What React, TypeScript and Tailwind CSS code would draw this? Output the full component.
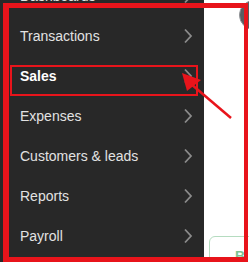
import React from "react";

const items = [
  { label: "Dashboards", active: false },
  { label: "Transactions", active: false },
  { label: "Sales", active: true },
  { label: "Expenses", active: false },
  { label: "Customers & leads", active: false },
  { label: "Reports", active: false },
  { label: "Payroll", active: false },
];

function Chevron() {
  return (
    <svg width="10" height="16" viewBox="0 0 10 16" fill="none">
      <path d="M2 1.5 L8 8 L2 14.5" stroke="#8b8b8b" strokeWidth="1.8" />
    </svg>
  );
}

export default function App() {
  return (
    <div className="relative flex h-[262px] w-[249px] overflow-hidden bg-white font-['Liberation_Sans',Arial,sans-serif]">
      {/* Sidebar */}
      <nav className="flex h-full w-[204px] shrink-0 flex-col bg-[#282828]">
        <div className="-mt-6 flex flex-col">
          {items.map((item) => (
            <div key={item.label} className="flex h-10 items-center justify-between pl-5 pr-[11px]">
              <span
                className={
                  item.active
                    ? "text-[14px] font-bold leading-5 text-white"
                    : "text-[14px] leading-5 text-[#e2e2e2]"
                }
              >
                {item.label}
              </span>
              <Chevron />
            </div>
          ))}
        </div>
      </nav>

      {/* Main area */}
      <div className="relative flex min-w-0 flex-1 flex-col">
        {/* avatar, cut off at the corner */}
        <div className="absolute -right-[20px] top-0 h-[30px] w-[30px] rounded-full border border-[#8f9296] bg-[#5a5d62]" />
        <div className="-mb-4 ml-[5px] mt-auto h-[42px] w-[80px] shrink-0 rounded-md border border-[#b5dcc0] pl-[25px] pt-[11px] leading-none">
          <span className="text-[14px] font-bold leading-none text-[#7cc493]">B</span>
        </div>
      </div>

      {/* Annotation overlays */}
      <div className="pointer-events-none absolute left-[3px] top-[3px] h-[259px] w-[245px] border-y-[5px] border-l-[6px] border-r-[4px] border-[#e8141b]" />
      <div className="pointer-events-none absolute left-[10px] top-[65px] h-[31px] w-[188px] border-2 border-[#e8141b]" />
      <svg className="pointer-events-none absolute left-0 top-0" width="249" height="262" viewBox="0 0 249 262">
        <polygon points="182,73 201,80 187,91" fill="#e8141b" />
        <line x1="231" y1="118" x2="191" y2="84" stroke="#e8141b" strokeWidth="2.5" />
      </svg>
    </div>
  );
}
